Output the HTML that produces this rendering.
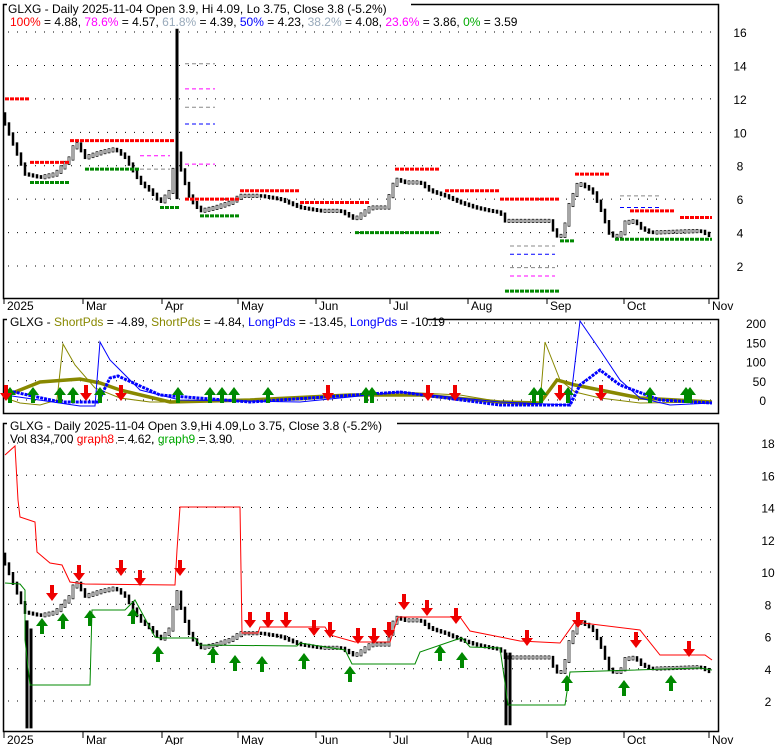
<!DOCTYPE html><html><head><style>body{margin:0;background:#fff;font-family:"Liberation Sans",sans-serif}svg text{font-family:"Liberation Sans",sans-serif;font-size:12px}</style></head><body>
<svg id="s" width="780" height="745" xmlns="http://www.w3.org/2000/svg">
<rect x="0" y="0" width="780" height="745" fill="#fff"/>
<g fill="none" stroke="#000" stroke-width="1.5">
<rect x="3.5" y="4.5" width="715" height="294"/>
<rect x="3.5" y="319.5" width="715" height="94"/>
<rect x="3.5" y="423.5" width="715" height="308"/>
</g>
<g id="grid"></g>
<g id="data"></g>
<g id="lab"></g>
<rect x="7" y="0" width="404" height="14" fill="#fff"/>
<text x="8" y="13">GLXG - Daily 2025-11-04 Open 3.9, Hi 4.09, Lo 3.75, Close 3.8 (-5.2%)</text>
<text x="10" y="26"><tspan fill="#f00">100%</tspan> = 4.88, <tspan fill="#f0f">78.6%</tspan> = 4.57, <tspan fill="#9ab">61.8%</tspan> = 4.39, <tspan fill="#00f">50%</tspan> = 4.23, <tspan fill="#9ab">38.2%</tspan> = 4.08, <tspan fill="#f0f">23.6%</tspan> = 3.86, <tspan fill="#0a0">0%</tspan> = 3.59</text>
<rect x="7" y="314" width="420" height="13" fill="#fff"/>
<text x="10" y="326">GLXG - <tspan fill="#880">ShortPds</tspan> = -4.89, <tspan fill="#880">ShortPds</tspan> = -4.84, <tspan fill="#00f">LongPds</tspan> = -13.45, <tspan fill="#00f">LongPds</tspan> = -10.19</text>
<rect x="7" y="418" width="390" height="13" fill="#fff"/>
<text x="10" y="430">GLXG - Daily 2025-11-04 Open 3.9,Hi 4.09,Lo 3.75, Close 3.8 (-5.2%)</text>
<text x="10" y="443">Vol 834,700 <tspan fill="#f00">graph8</tspan> = 4.62, <tspan fill="#0a0">graph9</tspan> = 3.90</text>
</svg>
<script>
const NS="http://www.w3.org/2000/svg",s=document.getElementById('s');
function el(t,a,p){const e=document.createElementNS(NS,t);for(const k in a)e.setAttribute(k,a[k]);(p||s).appendChild(e);return e}
const g=document.getElementById('grid'),d=document.getElementById('data'),lab=document.getElementById('lab');
const y1=p=>266-(p-2)*16.71,y3=p=>701-(p-2)*16.125,y2=v=>400-v*0.385;
function dots(y){el('line',{x1:8,x2:716,y1:y,y2:y,stroke:'#000','stroke-dasharray':'1 8','stroke-width':1},g)}
[2,4,6,8,10,12,14,16].forEach(p=>{dots(y1(p));const t=el('text',{x:740,y:y1(p)+5,'text-anchor':'middle'},lab);t.textContent=p});
[0,50,100,150,200].forEach(v=>{dots(y2(v));const t=el('text',{x:766,y:y2(v)+5,'text-anchor':'end'},lab);t.textContent=v});
[2,4,6,8,10,12,14,16,18].forEach(p=>{dots(y3(p));const t=el('text',{x:768,y:y3(p)+5,'text-anchor':'middle'},lab);t.textContent=p});
const mo=[[4,'2025'],[83,'Mar'],[162,'Apr'],[238,'May'],[316,'Jun'],[390,'Jul'],[468,'Aug'],[547,'Sep'],[624,'Oct'],[709,'Nov']];
mo.forEach(([x,n])=>{[[298,310],[732,744]].forEach(([b,ty])=>{el('line',{x1:x,x2:x,y1:b,y2:b+6,stroke:'#000'},lab);const t=el('text',{x:x+3,y:ty},lab);t.textContent=n})});
const P=[[5,10.5],[15,9],[25,7.5],[40,7.3],[55,7.5],[70,8.5],[75,9.5],[85,8.5],[100,8.8],[115,9],[125,8.5],[140,7],[150,6.5],[160,5.8],[170,6.5],[176,9],[182,7.5],[190,6],[200,5.3],[215,5.5],[230,5.8],[240,6.2],[260,6.2],[280,6],[300,5.5],[320,5.3],[340,5.3],[355,4.8],[370,5.5],[385,5.5],[395,7.2],[405,7],[420,7],[430,6.5],[445,6.2],[460,5.8],[475,5.5],[490,5.3],[500,5.2],[505,4.7],[550,4.7],[555,3.8],[563,3.8],[568,5.5],[578,7],[592,6.5],[600,5.5],[610,3.8],[620,3.8],[625,4.6],[635,4.7],[640,4.3],[650,4.0],[700,4.1],[710,3.8]];
function interp(x){for(let i=1;i<P.length;i++)if(x<=P[i][0]){const[a,b]=[P[i-1],P[i]];return a[1]+(b[1]-a[1])*(x-a[0])/(b[0]-a[0])}return 3.8}
for(let x=5;x<712;x+=4){const c=interp(x),o=interp(x-4);const hi=Math.max(c,o)+0.1,lo=Math.min(c,o)-0.1;
[y1,y3].forEach(f=>{if(c<o)el('line',{x1:x,x2:x,y1:f(hi),y2:f(lo),stroke:'#000','stroke-width':2.5},d);else el('rect',{x:x-1,y:f(hi),width:2,height:f(lo)-f(hi),fill:'#fff',stroke:'#000','stroke-width':0.7},d)})}
el('line',{x1:177,x2:177,y1:y1(16.2),y2:y1(6),stroke:'#000','stroke-width':3},d);
el('line',{x1:27,x2:27,y1:y3(7),y2:y3(0.3),stroke:'#000','stroke-width':3},d);
el('line',{x1:31,x2:31,y1:y3(6.5),y2:y3(0.3),stroke:'#000','stroke-width':3},d);
el('line',{x1:506,x2:506,y1:y3(5),y2:y3(0.5),stroke:'#000','stroke-width':3},d);
el('line',{x1:510,x2:510,y1:y3(5),y2:y3(0.5),stroke:'#000','stroke-width':3},d);
const R=[[5,30,12],[30,70,8.2],[70,175,9.5],[185,240,6],[240,300,6.5],[300,370,5.8],[395,440,7.8],[445,500,6.5],[500,560,6],[575,610,7.5],[630,675,5.3],[680,712,4.9]];
R.forEach(([a,b,p])=>el('line',{x1:a,x2:b,y1:y1(p),y2:y1(p),stroke:'#f00','stroke-width':3,'stroke-dasharray':'4 1'},d));
const G=[[30,70,7.0],[85,140,7.8],[160,180,5.5],[200,240,5.0],[355,395,4.0],[395,440,4.0],[505,560,0.5],[560,575,3.5],[615,712,3.6]];
G.forEach(([a,b,p])=>el('line',{x1:a,x2:b,y1:y1(p),y2:y1(p),stroke:'#080','stroke-width':3,'stroke-dasharray':'4 1'},d));
[[510,555,2.7,'#00f'],[510,555,3.2,'#888'],[510,555,1.9,'#888'],[510,555,1.4,'#f0f'],[185,215,14.1,'#888'],[185,215,12.6,'#f0f'],[185,215,11.5,'#888'],[185,215,10.5,'#00f'],[185,215,8.1,'#f0f'],[140,170,8.6,'#f0f'],[140,170,7.8,'#888'],[620,660,6.2,'#888'],[620,660,5.5,'#00f']].forEach(([a,b,p,c])=>el('line',{x1:a,x2:b,y1:y1(p),y2:y1(p),stroke:c,'stroke-dasharray':'4 3'},d));
function pl(pts,col,w,dash){el('polyline',{points:pts,fill:'none',stroke:col,'stroke-width':w||1,'stroke-dasharray':dash||''},d)}
pl('5,455 15,446 18,500 20,517 35,522 37,552 50,563 62,565 70,582 85,584 175,585 177,550 180,507 240,507 242,633 258,633 260,627 325,627 330,635 355,642 390,642 398,617 460,617 470,631 520,641 560,643 575,622 640,630 660,655 705,655 712,660','#f00');
pl('5,583 20,584 25,590 25,640 30,685 90,685 92,610 125,610 135,600 155,637 160,638 195,638 200,645 297,646 300,643 345,650 352,664 415,664 420,652 455,640 462,638 470,647 500,648 505,683 508,705 565,705 570,672 700,668 712,670','#080');
pl('5,398 20,403 40,405 57,400 63,344 75,365 95,388 120,398 150,402 200,402 300,400 400,392 460,395 520,405 540,404 545,342 560,380 575,392 600,398 640,403 712,402','#880');
pl('5,396 40,382 80,379 100,383 120,390 170,402 250,400 350,395 420,395 500,402 540,403 557,380 575,385 600,390 640,398 712,402','#880',3.5);
pl('5,395 80,406 95,406 100,342 110,360 140,390 180,400 300,402 400,392 500,402 570,405 580,321 600,350 620,380 640,398 670,405 712,403','#00f');
pl('5,390 60,402 98,402 110,378 118,376 160,395 250,402 400,392 500,405 570,405 580,385 600,370 620,385 660,400 712,403','#00f',3,'3 1');
function arr(x,y,up){const p=up?`${x},${y} ${x-6},${y+8} ${x-2},${y+8} ${x-2},${y+16} ${x+2},${y+16} ${x+2},${y+8} ${x+6},${y+8}`:`${x},${y+16} ${x-6},${y+8} ${x-2},${y+8} ${x-2},${y} ${x+2},${y} ${x+2},${y+8} ${x+6},${y+8}`;el('polygon',{points:p,fill:up?'#080':'#e00'},d)}
[[42,618],[63,613],[90,610],[133,608],[158,646],[213,647],[235,655],[262,656],[304,653],[350,666],[440,645],[462,652],[567,675],[624,680],[671,675]].forEach(a=>arr(a[0],a[1],1));
[[52,585],[79,565],[121,560],[140,570],[180,560],[250,612],[268,612],[286,612],[314,620],[330,622],[358,628],[374,628],[389,622],[404,594],[427,600],[456,608],[527,630],[578,612],[636,632],[689,641]].forEach(a=>arr(a[0],a[1],0));
[[10,395],[33,395],[60,395],[73,395],[100,395],[178,395],[210,395],[222,395],[234,395],[268,395],[366,395],[372,395],[534,395],[541,395],[568,395],[650,395],[686,395],[690,395]].forEach(a=>arr(a[0],a[1]-8,1));
[[6,395],[86,395],[121,395],[328,395],[428,395],[455,395],[560,395],[601,395]].forEach(a=>arr(a[0],a[1]-10,0));
</script>
</body></html>
